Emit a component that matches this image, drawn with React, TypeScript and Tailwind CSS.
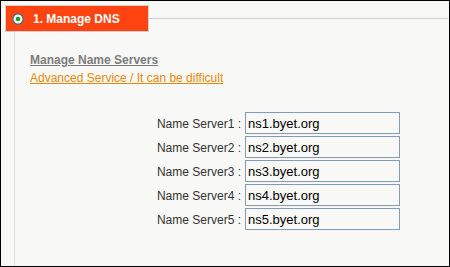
import React from 'react';

const servers = ['ns1.byet.org', 'ns2.byet.org', 'ns3.byet.org', 'ns4.byet.org', 'ns5.byet.org'];

function RadioDot() {
  return (
    <svg width="12" height="12" viewBox="0 0 12 12" className="shrink-0">
      <circle cx="6" cy="6" r="5.2" fill="#f4f6f8" stroke="#5a6470" strokeWidth="1.4" />
      <circle cx="6" cy="6" r="2.3" fill="#1f9a2e" />
    </svg>
  );
}

export default function App() {
  return (
    <div className="w-[450px] h-[267px] border border-black bg-[#f8f8f6] font-['Liberation_Sans',Arial,sans-serif] flex flex-col pt-[4px] pl-[4px] overflow-hidden">
      {/* Section header */}
      <div className="flex items-center">
        <div className="w-[144px] h-[27px] border border-[#d2d2d2] bg-[#ff4411] flex items-center pl-[6px] gap-[9px]">
          <RadioDot />
          <span className="text-white font-bold text-[12px] leading-none">1. Manage DNS</span>
        </div>
        <div className="flex-1 h-px bg-[#cfcfcf]" />
      </div>

      {/* Body */}
      <div className="flex-1 ml-[9px] border-l border-[#dcdcdc] pl-[15px] pt-[19px]">
        <div className="text-[12px] leading-[18px]">
          <a className="block font-bold text-[#7c7c7c] underline">Manage Name Servers</a>
          <a className="block text-[#e8890a] underline">Advanced Service / It can be difficult</a>
        </div>

        <div className="mt-[25px] flex flex-col gap-[2px]">
          {servers.map((ns, i) => (
            <div key={ns} className="flex items-center">
              <label className="w-[211px] text-right text-[12px] text-[#333333] pt-[2px]">
                Name Server{i + 1} :
              </label>
              <input
                defaultValue={ns}
                className="ml-[4px] w-[155px] h-[22px] border border-[#7f9db9] bg-[#f8f8f6] pl-[2px] text-[13px] text-black font-['Liberation_Sans',Arial,sans-serif] outline-none"
              />
            </div>
          ))}
        </div>
      </div>
    </div>
  );
}
